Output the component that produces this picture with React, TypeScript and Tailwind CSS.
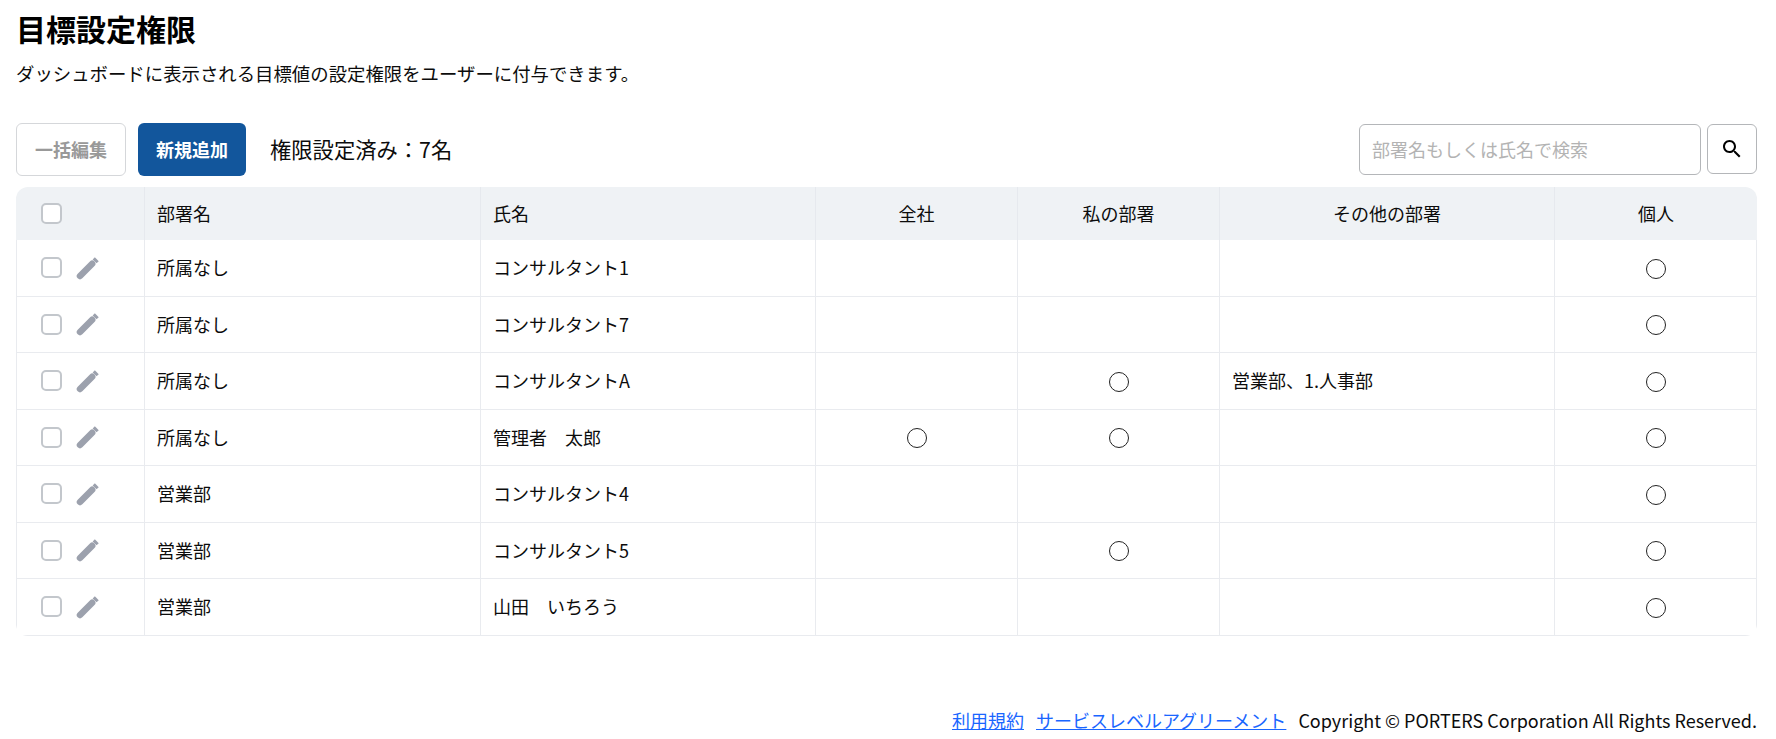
type Row = {
  dept: string;
  name: string;
  company?: boolean;
  mine?: boolean;
  others?: string;
};

const rows: Row[] = [
  { dept: "所属なし", name: "コンサルタント1" },
  { dept: "所属なし", name: "コンサルタント7" },
  { dept: "所属なし", name: "コンサルタントA", mine: true, others: "営業部、1.人事部" },
  { dept: "所属なし", name: "管理者　太郎", company: true, mine: true },
  { dept: "営業部", name: "コンサルタント4" },
  { dept: "営業部", name: "コンサルタント5", mine: true },
  { dept: "営業部", name: "山田　いちろう" },
];

function Circle() {
  return <span className="block mx-auto mt-[2px] w-5 h-5 rounded-full border border-[#222]" />;
}

function Check() {
  return <span className="block w-[21px] h-[21px] rounded-[5px] border-2 border-[#c3c7cc] bg-white" />;
}

function Pencil() {
  return (
    <svg width="24" height="24" viewBox="0 0 24 24" fill="none" stroke="#9ca1ad" strokeWidth="6.5">
      <path d="M4 20 16.2 7.8" strokeLinecap="round" />
      <path d="M18.6 5.4 20.8 3.2" strokeWidth="5.5" />
    </svg>
  );
}

function SearchIcon() {
  return (
    <svg width="24" height="24" viewBox="0 0 24 24" fill="#000">
      <path d="M15.5 14h-.79l-.28-.27C15.41 12.59 16 11.11 16 9.5 16 5.91 13.09 3 9.5 3S3 5.91 3 9.5 5.91 16 9.5 16c1.61 0 3.09-.59 4.23-1.57l.27.28v.79l5 4.99L20.49 19l-4.99-5zm-6 0C7.01 14 5 11.99 5 9.5S7.01 5 9.5 5 14 7.01 14 9.5 11.99 14 9.5 14z" />
    </svg>
  );
}

const th = "border-l border-[#e6e9ee] font-normal";
const td = "border-l border-b border-[#e9ebef]";

export default function App() {
  return (
    <div className="w-[1776px] h-[739px] flex flex-col px-4 bg-white text-[#0c0c0c] text-[18px] font-['Noto_Sans_CJK_JP','Noto_Sans',sans-serif]">
      <h1 className="mt-[6px] text-[30px] leading-[44px] font-bold text-black">目標設定権限</h1>
      <p className="mt-[10px] text-[18.4px] leading-[26px]">ダッシュボードに表示される目標値の設定権限をユーザーに付与できます。</p>

      <div className="mt-[36px] flex items-center h-[54px]">
        <button className="w-[110px] h-[53px] rounded-[6px] border border-[#d5d7da] text-[#999] font-bold">一括編集</button>
        <button className="ml-3 w-[108px] h-[53px] rounded-[6px] bg-[#12569c] text-white font-bold">新規追加</button>
        <span className="ml-6 text-[21.3px]">権限設定済み：7名</span>
        <div className="ml-auto flex items-center gap-[6px] mr-[3px]">
          <input
            placeholder="部署名もしくは氏名で検索"
            className="w-[342px] h-[51px] rounded-[6px] border border-[#b4b6b9] px-3 text-[18px] placeholder:text-[#b3b3b3]"
          />
          <button className="w-[50px] h-[50px] rounded-[6px] border border-[#b4b6b9] flex items-center justify-center">
            <SearchIcon />
          </button>
        </div>
      </div>

      <div className="mt-[11px] w-[1741px] rounded-[12px] overflow-hidden">
        <table className="w-full table-fixed border-separate border-spacing-0">
          <colgroup>
            <col className="w-[128px]" />
            <col className="w-[336px]" />
            <col className="w-[335px]" />
            <col className="w-[202px]" />
            <col className="w-[202px]" />
            <col className="w-[335px]" />
            <col className="w-[203px]" />
          </colgroup>
          <thead>
            <tr className="h-[53px] bg-[#eff2f5]">
              <th className="font-normal">
                <div className="pl-[25px]">
                  <Check />
                </div>
              </th>
              <th className={`${th} text-left pl-[12px]`}>部署名</th>
              <th className={`${th} text-left pl-[12px]`}>氏名</th>
              <th className={th}>全社</th>
              <th className={th}>私の部署</th>
              <th className={th}>その他の部署</th>
              <th className={th}>個人</th>
            </tr>
          </thead>
          <tbody>
            {rows.map((row, i) => (
              <tr key={i} className="h-[56.5px]">
                <td className={td}>
                  <div className="flex items-center gap-[14px] pl-[24px]">
                    <Check />
                    <Pencil />
                  </div>
                </td>
                <td className={`${td} pl-[12px]`}>{row.dept}</td>
                <td className={`${td} pl-[12px]`}>{row.name}</td>
                <td className={td}>{row.company && <Circle />}</td>
                <td className={td}>{row.mine && <Circle />}</td>
                <td className={`${td} pl-[12px]`}>{row.others}</td>
                <td className={`${td} border-r`}>
                  <Circle />
                </td>
              </tr>
            ))}
          </tbody>
        </table>
      </div>

      <div className="mt-auto mb-[6px] mr-[3px] flex justify-end gap-3 leading-[26px]">
        <a className="text-[#1a66ff] underline">利用規約</a>
        <a className="text-[#1a66ff] underline">サービスレベルアグリーメント</a>
        <span>Copyright © PORTERS Corporation All Rights Reserved.</span>
      </div>
    </div>
  );
}
